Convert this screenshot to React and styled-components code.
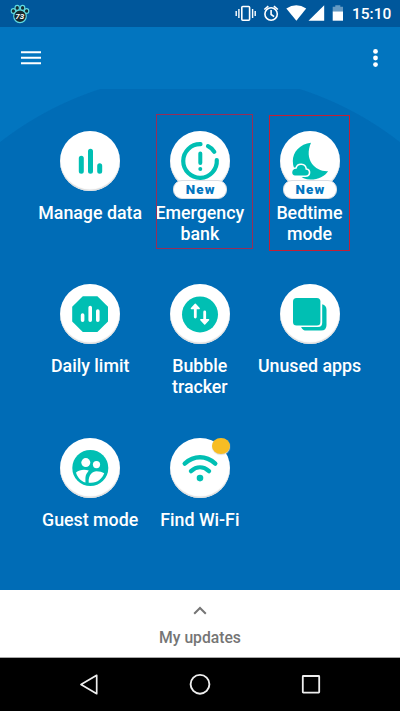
import React from "react";
import styled, { createGlobalStyle } from "styled-components";

const colors = {
  status: "#00579b",
  bar: "#0275bf",
  panel: "#006cb6",
  teal: "#00bfb3",
  red: "#c41f35",
  gray: "#757575",
};

const GlobalStyle = createGlobalStyle`
  * {
    box-sizing: border-box;
  }

  body {
    margin: 0;
    font-family: Roboto, "Liberation Sans", sans-serif;
  }

  svg {
    display: block;
    flex: none;
  }
`;

const Screen = styled.div`
  display: flex;
  flex-direction: column;
  width: 400px;
  height: 711px;
  overflow: hidden;
  background: ${colors.bar};
`;

const StatusBar = styled.header`
  display: flex;
  flex: none;
  align-items: center;
  height: 27px;
  padding: 0 8px 0 10px;
  background: ${colors.status};
  color: #fff;
`;

const StatusIcons = styled.div`
  display: flex;
  margin-left: auto;
`;

const Clock = styled.span`
  width: 40px;
  margin-left: 7px;
  font-size: 15.5px;
  font-weight: 500;
  line-height: 28px;
  white-space: nowrap;
`;

const AppBar = styled.div`
  display: flex;
  flex: none;
  align-items: center;
  justify-content: space-between;
  height: 62px;
  padding: 0 21px;
`;

const IconButton = styled.button`
  display: flex;
  padding: 0;
  border: 0;
  background: none;
`;

const Panel = styled.main`
  flex: 1;
  min-height: 0;
  padding: 42px 35.3px 0;
  background: radial-gradient(
    circle at 200px 309.5px,
    ${colors.panel} 324.7px,
    ${colors.bar} 325.7px
  );
`;

const Grid = styled.div`
  display: grid;
  grid-template-columns: repeat(3, 109.7px);
  grid-auto-rows: 153.3px;
`;

const Tile = styled.div`
  position: relative;
  display: flex;
  flex-direction: column;
  align-items: center;
`;

const Disc = styled.div`
  position: relative;
  width: 60px;
  height: 60px;
  border-radius: 50%;
  background: #fff;
  box-shadow: inset 0 -1.5px 1px #dedede;
`;

const Label = styled.div`
  margin-top: 11px;
  color: #fff;
  font-size: 17.8px;
  font-weight: 500;
  line-height: 21px;
  text-align: center;
  white-space: pre;
`;

const Badge = styled.span`
  position: absolute;
  top: 49px;
  left: 3.4px;
  width: 54px;
  height: 19px;
  border: 1px solid #d9dde3;
  border-radius: 9px;
  background: #fff;
  color: ${colors.bar};
  font-size: 13.4px;
  font-weight: 900;
  letter-spacing: 1.2px;
  line-height: 18px;
  text-align: center;
  text-indent: 1px;
`;

const Dot = styled.span`
  position: absolute;
  top: 0;
  right: 0;
  width: 18px;
  height: 16px;
  border-radius: 50%;
  background: #f7bd24;
  box-shadow: 0 1px 1px #ddd;
`;

const Frame = styled.div`
  position: absolute;
  top: ${(p) => p.$top}px;
  left: ${(p) => p.$left}px;
  width: ${(p) => p.$width}px;
  height: ${(p) => p.$height}px;
  border: 1px solid ${(p) => p.$color};
`;

const Updates = styled.section`
  display: flex;
  flex: none;
  flex-direction: column;
  align-items: center;
  height: 68px;
  padding-top: 16px;
  border-bottom: 1px solid #a8a8a8;
  background: #fff;
  color: ${colors.gray};
  font-size: 15.7px;
  font-weight: 500;
  line-height: 20px;

  svg {
    margin-bottom: 13px;
  }
`;

const NavBar = styled.nav`
  display: flex;
  flex: none;
  justify-content: space-between;
  height: 53px;
  padding: 15px 78px 0;
  background: #000;
`;

const icons = {
  bars: (
    <g stroke={colors.teal} strokeWidth="5" strokeLinecap="round">
      <path d="M21.3 27.3v13M30.5 20.3v20M39.7 34.8v5.5" />
    </g>
  ),
  bank: (
    <g fill="none" stroke={colors.teal} strokeWidth="4.2" strokeLinecap="round">
      <path d="M30.5 13.2A16.8 16.8 0 1 0 46.8 29M38 15.2q3.8 1.8 6.3 5.6" />
      <path d="M30.3 22.5v9.5M30.3 38v.1" strokeWidth="4" />
    </g>
  ),
  moon: (
    <g>
      <path
        d="M31 11.8C20 13 12.8 21 12.8 30c0 11 8.2 18.5 17.7 18.5 8 0 14.2-3.3 17.6-8.3C35.5 41 23.5 29 31 11.8z"
        fill={colors.teal}
      />
      <path
        d="M15 45.2h10.5c5 0 5.5-6.4.8-7.2C25.5 32 17.5 31.8 16 37c-5.8.2-6 8.2-1 8.2z"
        fill={colors.teal}
        stroke="#fff"
        strokeWidth="1.6"
      />
    </g>
  ),
  limit: (
    <g>
      <path
        d="M22.8 12.3h14.6L48 22.8v14.6L37.4 48H22.8L12.2 37.4V22.8z"
        fill={colors.teal}
      />
      <path
        d="M22.6 31v5.3M30.2 23.5v12.8M37.8 27v9.3"
        stroke="#fff"
        strokeWidth="3.6"
        strokeLinecap="round"
      />
    </g>
  ),
  bubble: (
    <g>
      <circle cx="30" cy="30.4" r="18" fill={colors.teal} />
      <g stroke="#fff" strokeWidth="2.8" strokeLinecap="round">
        <path d="M25.3 24v9M34.7 28v8.5" />
        <path
          d="M25.3 20.2l3.9 4.3h-7.8zM34.7 40l3.9-4.3h-7.8z"
          fill="#fff"
          strokeWidth="1.4"
          strokeLinejoin="round"
        />
      </g>
    </g>
  ),
  apps: (
    <g fill={colors.teal}>
      <path d="M42.2 20.2q4.3 1 4.3 5.5V41q0 5.5-5.5 5.5H26.5q-4 0-5.4-3.6H38q4.2 0 4.2-4.2z" />
      <rect x="13" y="14" width="27.4" height="27.4" rx="3.5" />
    </g>
  ),
  guest: (
    <g>
      <circle cx="30.3" cy="30" r="18" fill={colors.teal} />
      <g fill="#fff">
        <circle cx="25.8" cy="24.6" r="4.5" />
        <circle cx="36.5" cy="26.6" r="3.6" />
        <path d="M16 34.5c3.5-3 8.5-3.5 12.8-2l-2.4 3.4c-1.2 2-1 5.2-.9 8.6-4.8-1.3-8.3-5.5-9.5-10zM28.7 44.7c-.5-8.2 4-11.4 7.7-11.4 3 0 6 .7 7.8 2-2.3 5.7-7.4 10.5-15.5 9.4z" />
      </g>
    </g>
  ),
  wifi: (
    <g fill="none" stroke={colors.teal} strokeWidth="4.4" strokeLinecap="round">
      <path d="M14.7 25.6C24 17.2 36 17.2 45.3 25.6M21 33.1c5.5-5 12.5-5 18 0" />
      <circle cx="30" cy="40.1" r="3.3" fill={colors.teal} stroke="none" />
    </g>
  ),
};

const tiles = [
  { label: "Manage data", icon: "bars" },
  {
    label: "Emergency\nbank",
    icon: "bank",
    badge: true,
    frame: {
      $top: -17,
      $left: 11,
      $width: 97,
      $height: 135,
      $color: "#962e58",
    },
  },
  {
    label: "Bedtime\nmode",
    icon: "moon",
    badge: true,
    frame: {
      $top: -16,
      $left: 14.3,
      $width: 81,
      $height: 136,
      $color: colors.red,
    },
  },
  { label: "Daily limit", icon: "limit" },
  { label: "Bubble\ntracker", icon: "bubble" },
  { label: "Unused apps", icon: "apps" },
  { label: "Guest mode", icon: "guest" },
  { label: "Find Wi-Fi", icon: "wifi", dot: true },
];

const PawIcon = () => (
  <svg width="20" height="20" viewBox="0 0 20 20">
    <g fill="#17292d" stroke="#60dce2" strokeWidth="1.1">
      <ellipse cx="3.4" cy="7" rx="2.2" ry="2.4" />
      <ellipse cx="7.2" cy="3.9" rx="2.2" ry="2.5" />
      <ellipse cx="12.6" cy="3.9" rx="2.2" ry="2.5" />
      <ellipse cx="16.6" cy="7" rx="2.2" ry="2.4" />
      <circle cx="10" cy="12.3" r="6.3" />
    </g>
    <text
      x="9.8"
      y="15.1"
      fill="#fff"
      fontFamily="Roboto"
      fontSize="8"
      fontStyle="italic"
      fontWeight="700"
      textAnchor="middle"
    >
      73
    </text>
  </svg>
);

const SignalIcons = () => (
  <svg width="110" height="27" viewBox="0 0 110 27" fill="#fff">
    <g fill="none" stroke="#fff" strokeWidth="1.6">
      <rect x="6.8" y="6.5" width="7.8" height="13.8" rx="1" />
      <path d="M3.9 9v9M17.6 9v9M1.2 11v5M20.2 11v5" strokeWidth="1.4" />
      <circle cx="36.1" cy="14" r="6.2" />
      <path d="M36.1 10v4.5l3 2.2M29.3 9.5l4-3.3M42.9 9.5l-4-3.3" />
    </g>
    <path d="M51.3 8.5Q61.4 1.8 71.2 8.5L61.4 20.7z" />
    <path d="M89.2 5.2v15.6H73.5z" />
    <path d="M100.3 5.3h5v1.4h2.7v4.8H97.7V6.7h2.6z" opacity=".4" />
    <path d="M97.7 11.4H108v9.3H97.7z" />
  </svg>
);

export default function App() {
  return (
    <>
      <GlobalStyle />
      <Screen>
        <StatusBar>
          <PawIcon />
          <StatusIcons>
            <SignalIcons />
          </StatusIcons>
          <Clock>15:10</Clock>
        </StatusBar>
        <AppBar>
          <IconButton aria-label="Menu">
            <svg width="20" height="14" viewBox="0 0 20 14" fill="#fff">
              <path d="M0 .2h20v2.1H0zM0 5.7h20v2.1H0zM0 11.2h20v2.1H0z" />
            </svg>
          </IconButton>
          <IconButton aria-label="More">
            <svg width="7" height="18" viewBox="0 0 7 18" fill="#fff">
              <circle cx="3.5" cy="2.4" r="2.4" />
              <circle cx="3.5" cy="9" r="2.4" />
              <circle cx="3.5" cy="15.6" r="2.4" />
            </svg>
          </IconButton>
        </AppBar>
        <Panel>
          <Grid>
            {tiles.map(({ label, icon, badge, dot, frame }) => (
              <Tile key={label}>
                <Disc>
                  <svg width="60" height="60" viewBox="0 0 60 60">
                    {icons[icon]}
                  </svg>
                  {badge && <Badge>New</Badge>}
                  {dot && <Dot />}
                </Disc>
                <Label>{label}</Label>
                {frame && <Frame {...frame} />}
              </Tile>
            ))}
          </Grid>
        </Panel>
        <Updates>
          <svg
            width="14"
            height="9"
            viewBox="0 0 14 9"
            fill="none"
            stroke={colors.gray}
            strokeWidth="2"
          >
            <path d="M1.2 7.8L7 2l5.8 5.8" />
          </svg>
          My updates
        </Updates>
        <NavBar>
          <svg width="22" height="24" fill="none" stroke="#eee" strokeWidth="1.7">
            <path d="M18.7 2.3v18.4L3 11.5z" strokeLinejoin="round" />
          </svg>
          <svg width="22" height="24" fill="none" stroke="#eee" strokeWidth="1.9">
            <circle cx="11" cy="11.3" r="9.4" />
          </svg>
          <svg width="22" height="24" fill="none" stroke="#eee" strokeWidth="1.8">
            <rect x="2.8" y="3" width="16.4" height="16.6" rx=".5" />
          </svg>
        </NavBar>
      </Screen>
    </>
  );
}
